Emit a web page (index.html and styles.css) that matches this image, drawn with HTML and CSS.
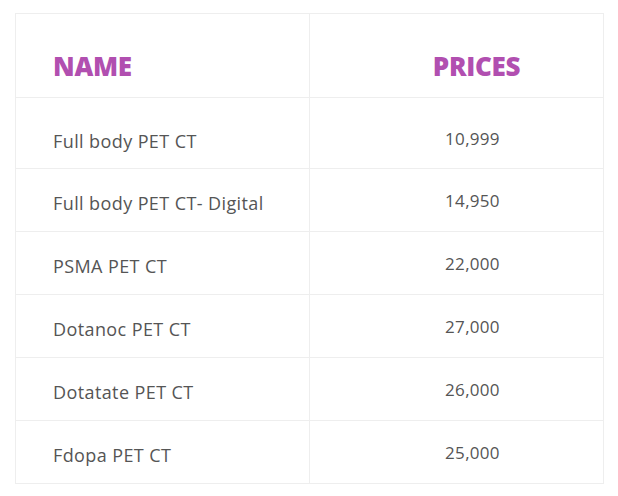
FILE: index.html
```html
<!DOCTYPE html>
<html lang="en">
<head>
<meta charset="utf-8">
<title>PET CT Prices</title>
<link rel="stylesheet" href="styles.css">
</head>
<body>
<table class="prices">
  <thead>
    <tr>
      <th class="col-name">NAME</th>
      <th class="col-price">PRICES</th>
    </tr>
  </thead>
  <tbody>
    <tr class="first"><td class="name">Full body PET CT</td><td class="price">10,999</td></tr>
    <tr><td class="name">Full body PET CT- Digital</td><td class="price">14,950</td></tr>
    <tr><td class="name">PSMA PET CT</td><td class="price">22,000</td></tr>
    <tr><td class="name">Dotanoc PET CT</td><td class="price">27,000</td></tr>
    <tr><td class="name">Dotatate PET CT</td><td class="price">26,000</td></tr>
    <tr><td class="name">Fdopa PET CT</td><td class="price">25,000</td></tr>
  </tbody>
</table>
</body>
</html>
```

FILE: styles.css
```css
html, body {
  margin: 0;
  padding: 0;
  background: #ffffff;
}

body {
  font-family: "Open Sans", "Liberation Sans", sans-serif;
  padding: 13px 15px 0 15px;
}

.prices {
  width: 589px;
  border-collapse: collapse;
  table-layout: fixed;
  border: 1px solid #eeeeee;
}

.prices th,
.prices td {
  border: 1px solid #eeeeee;
}

.prices th {
  font-size: 26px;
  font-weight: 800;
  color: #b14fb0;
  line-height: 30px;
  padding: 37px 0 16px 0;
  letter-spacing: -0.3px;
}

.col-name {
  text-align: left;
  padding-left: 37px !important;
}

.col-price {
  text-align: center;
  padding-left: 40px !important;
}

.prices td {
  font-size: 18px;
  line-height: 24px;
  color: #555555;
  padding: 22px 0 16px 0;
  vertical-align: top;
}

.prices .first td {
  padding-top: 31px;
  padding-bottom: 15px;
}

.name {
  padding-left: 37px !important;
  letter-spacing: 0.4px;
}

.price {
  text-align: center;
  padding-left: 32px !important;
  font-size: 17px !important;
  font-weight: 400;
  color: #555555 !important;
  letter-spacing: 0.3px;
  position: relative;
  top: -2px;
}
```
